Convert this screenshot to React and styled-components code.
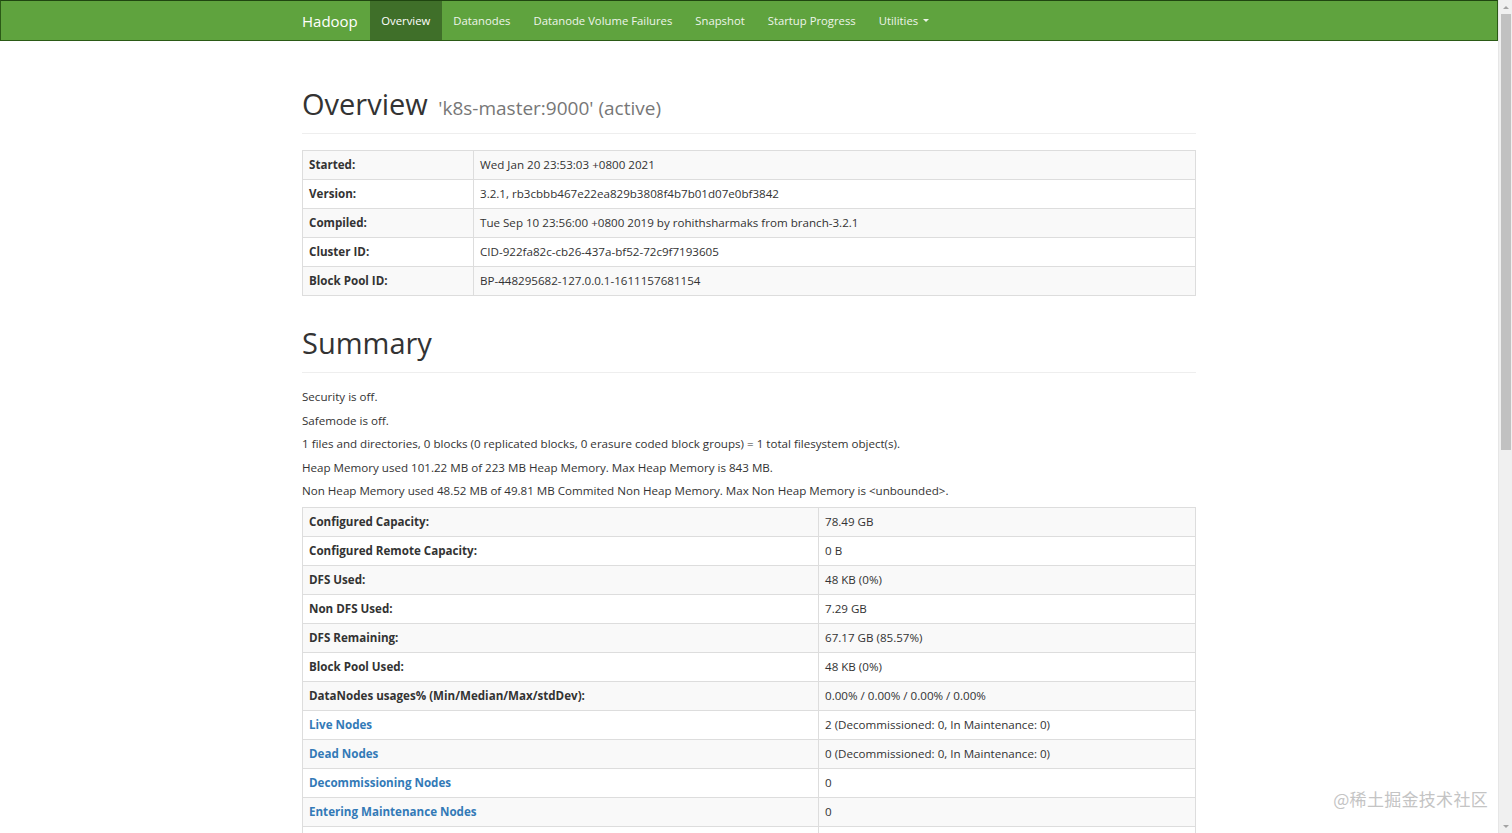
import React from "react";
import styled, { createGlobalStyle } from "styled-components";

const GlobalStyle = createGlobalStyle`
  html, body {
    margin: 0;
    height: 100%;
    overflow: hidden;
  }
  body {
    font-family: "Open Sans", "Noto Sans", "Liberation Sans", sans-serif;
    font-size: 11.6px;
    color: #333;
    background: #fff;
  }
  * { box-sizing: border-box; }
`;

const Window = styled.div`
  position: relative;
  display: flex;
  height: 100vh;
`;

const Page = styled.div`
  flex: 1;
  overflow: hidden;
`;

/* drawn browser scrollbar, the page is a still capture */
const Scrollbar = styled.div`
  width: 14px;
  background: #f0f0f0;
  border-left: 1px solid #e6e6e6;
  display: flex;
  flex-direction: column;
  align-items: center;
`;

const ScrollArrow = styled.div`
  height: 14px;
  display: flex;
  align-items: center;
  justify-content: center;
  &::after {
    content: "";
    border-left: 3px solid transparent;
    border-right: 3px solid transparent;
    ${(p) => (p.$down ? "border-top" : "border-bottom")}: 3px solid #a3a3a3;
  }
`;

const Thumb = styled.div`
  width: 10px;
  height: 436px;
  background: #c1c1c1;
`;

const Spacer = styled.div`
  flex: 1;
`;

const Navbar = styled.nav`
  height: 41px;
  background: #5fa33e;
  border: 1px solid #2b5a16;
  border-top-color: #1f4510;
`;

const NavInner = styled.div`
  width: 918px;
  margin: 0 auto;
  padding-left: 12px;
  display: flex;
  align-items: stretch;
  height: 39px;
`;

const Brand = styled.a`
  font-size: 15px;
  color: #fff;
  display: flex;
  align-items: center;
  padding-right: 12px;
  text-decoration: none;
`;

const NavLink = styled.a`
  display: flex;
  align-items: center;
  padding: 0 11.5px;
  font-size: 11.3px;
  color: ${(p) => (p.$active ? "#fff" : "#eef5ea")};
  background: ${(p) => (p.$active ? "#3f6f29" : "transparent")};
  text-decoration: none;
`;

const Caret = styled.span`
  display: inline-block;
  margin-left: 5px;
  border-top: 3px solid #eef5ea;
  border-left: 3px solid transparent;
  border-right: 3px solid transparent;
`;

const Container = styled.div`
  width: 894px;
  margin: 0 auto;
  padding-bottom: 40px;
`;

const PageHeader = styled.div`
  margin: ${(p) => p.$top}px 0 16px;
  padding-bottom: ${(p) => p.$pb ?? 12}px;
  border-bottom: 1px solid #eee;
`;

const H1 = styled.h1`
  margin: 0;
  font-size: 29px;
  font-weight: 400;
  line-height: 31px;
  color: #333;
`;

const Small = styled.small`
  font-size: 19px;
  color: #777;
  margin-left: 3px;
`;

const H2 = styled.h2`
  margin: 30px 0 12px;
  font-size: 22px;
  font-weight: 400;
  color: #333;
`;

const Para = styled.p`
  margin: 0 0 7.5px;
  line-height: 16px;
`;

const Table = styled.table`
  width: 100%;
  border-collapse: collapse;
  margin-bottom: 16px;
  tr:nth-child(odd) td,
  tr:nth-child(odd) th {
    background: #f9f9f9;
  }
  th, td {
    border: 1px solid #ddd;
    padding: 0 6px;
    height: 29px;
    text-align: left;
    vertical-align: middle;
    line-height: 16px;
  }
  th {
    font-weight: 700;
  }
  thead th {
    background: #fff !important;
    border-bottom-width: 2px;
  }
`;

const LabelCell = styled.th`
  width: ${(p) => p.$w}px;
`;

const Link = styled.a`
  color: #337ab7;
  font-weight: 700;
  text-decoration: none;
`;

const Watermark = styled.div`
  position: absolute;
  right: 24px;
  bottom: 22px;
  font-family: "Noto Sans CJK SC", sans-serif;
  font-size: 17px;
  color: #c4c4c4;
  letter-spacing: 0.3px;
  pointer-events: none;
`;

const overview = [
  ["Started:", "Wed Jan 20 23:53:03 +0800 2021"],
  ["Version:", "3.2.1, rb3cbbb467e22ea829b3808f4b7b01d07e0bf3842"],
  ["Compiled:", "Tue Sep 10 23:56:00 +0800 2019 by rohithsharmaks from branch-3.2.1"],
  ["Cluster ID:", "CID-922fa82c-cb26-437a-bf52-72c9f7193605"],
  ["Block Pool ID:", "BP-448295682-127.0.0.1-1611157681154"],
];

const summaryLines = [
  "Security is off.",
  "Safemode is off.",
  "1 files and directories, 0 blocks (0 replicated blocks, 0 erasure coded block groups) = 1 total filesystem object(s).",
  "Heap Memory used 101.22 MB of 223 MB Heap Memory. Max Heap Memory is 843 MB.",
  "Non Heap Memory used 48.52 MB of 49.81 MB Commited Non Heap Memory. Max Non Heap Memory is <unbounded>.",
];

const summary = [
  ["Configured Capacity:", "78.49 GB"],
  ["Configured Remote Capacity:", "0 B"],
  ["DFS Used:", "48 KB (0%)"],
  ["Non DFS Used:", "7.29 GB"],
  ["DFS Remaining:", "67.17 GB (85.57%)"],
  ["Block Pool Used:", "48 KB (0%)"],
  ["DataNodes usages% (Min/Median/Max/stdDev):", "0.00% / 0.00% / 0.00% / 0.00%"],
  ["Live Nodes", "2 (Decommissioned: 0, In Maintenance: 0)", true],
  ["Dead Nodes", "0 (Decommissioned: 0, In Maintenance: 0)", true],
  ["Decommissioning Nodes", "0", true],
  ["Entering Maintenance Nodes", "0", true],
  ["Total Datanode Volume Failures", "0 (0 B)", true],
  ["Number of Under-Replicated Blocks", "0"],
  ["Number of Blocks Pending Deletion (including replicas)", "0"],
  ["Block Deletion Start Time", "Wed Jan 20 23:53:03 +0800 2021"],
  ["Last Checkpoint Time", "Wed Jan 20 23:53:07 +0800 2021"],
  ["Enabled Erasure Coding Policies", "RS-6-3-1024k"],
];

function KeyTable({ rows, labelWidth }) {
  return (
    <Table>
      <tbody>
        {rows.map(([k, v, link]) => (
          <tr key={k}>
            <LabelCell $w={labelWidth}>{link ? <Link href="#">{k}</Link> : k}</LabelCell>
            <td>{v}</td>
          </tr>
        ))}
      </tbody>
    </Table>
  );
}

export default function App() {
  return (
    <>
      <GlobalStyle />
      <Window>
        <Page>
          <Navbar>
            <NavInner>
              <Brand href="#">Hadoop</Brand>
              <NavLink $active href="#">Overview</NavLink>
              <NavLink href="#">Datanodes</NavLink>
              <NavLink href="#">Datanode Volume Failures</NavLink>
              <NavLink href="#">Snapshot</NavLink>
              <NavLink href="#">Startup Progress</NavLink>
              <NavLink href="#">
                Utilities <Caret />
              </NavLink>
            </NavInner>
          </Navbar>
          <Container>
            <PageHeader $top={47} $pb={9}>
              <H1>
                Overview <Small>'k8s-master:9000' (active)</Small>
              </H1>
            </PageHeader>
            <KeyTable rows={overview} labelWidth={171} />

            <PageHeader $top={31} $pb={14}>
              <H1>Summary</H1>
            </PageHeader>
            {summaryLines.map((l) => (
              <Para key={l}>{l}</Para>
            ))}
            <KeyTable rows={summary} labelWidth={516} />

            <PageHeader $top={31}>
              <H1>NameNode Journal Status</H1>
            </PageHeader>
            <Para>
              <b>Current transaction ID:</b> 4
            </Para>
            <Table>
              <thead>
                <tr>
                  <th>Journal Manager</th>
                  <th>State</th>
                </tr>
              </thead>
              <tbody>
                <tr>
                  <td>FileJournalManager(root=/tmp/hadoop-root/dfs/name)</td>
                  <td>EditLogFileOutputStream(/tmp/hadoop-root/dfs/name/current/edits_inprogress_0000000000000000001)</td>
                </tr>
              </tbody>
            </Table>

            <H2>DFS Storage Types</H2>
            <Table>
              <thead>
                <tr>
                  <th>Storage Type</th>
                  <th>Configured Capacity</th>
                  <th>Capacity Used</th>
                  <th>Capacity Remaining</th>
                  <th>Block Pool Used</th>
                  <th>Nodes In Service</th>
                </tr>
              </thead>
              <tbody>
                <tr>
                  <td>DISK</td>
                  <td>78.49 GB</td>
                  <td>48 KB (0%)</td>
                  <td>67.17 GB (85.57%)</td>
                  <td>48 KB</td>
                  <td>2</td>
                </tr>
              </tbody>
            </Table>
          </Container>
        </Page>
        <Scrollbar>
          <ScrollArrow />
          <Thumb />
          <Spacer />
          <ScrollArrow $down />
        </Scrollbar>
      </Window>
      <Watermark>@稀土掘金技术社区</Watermark>
    </>
  );
}
